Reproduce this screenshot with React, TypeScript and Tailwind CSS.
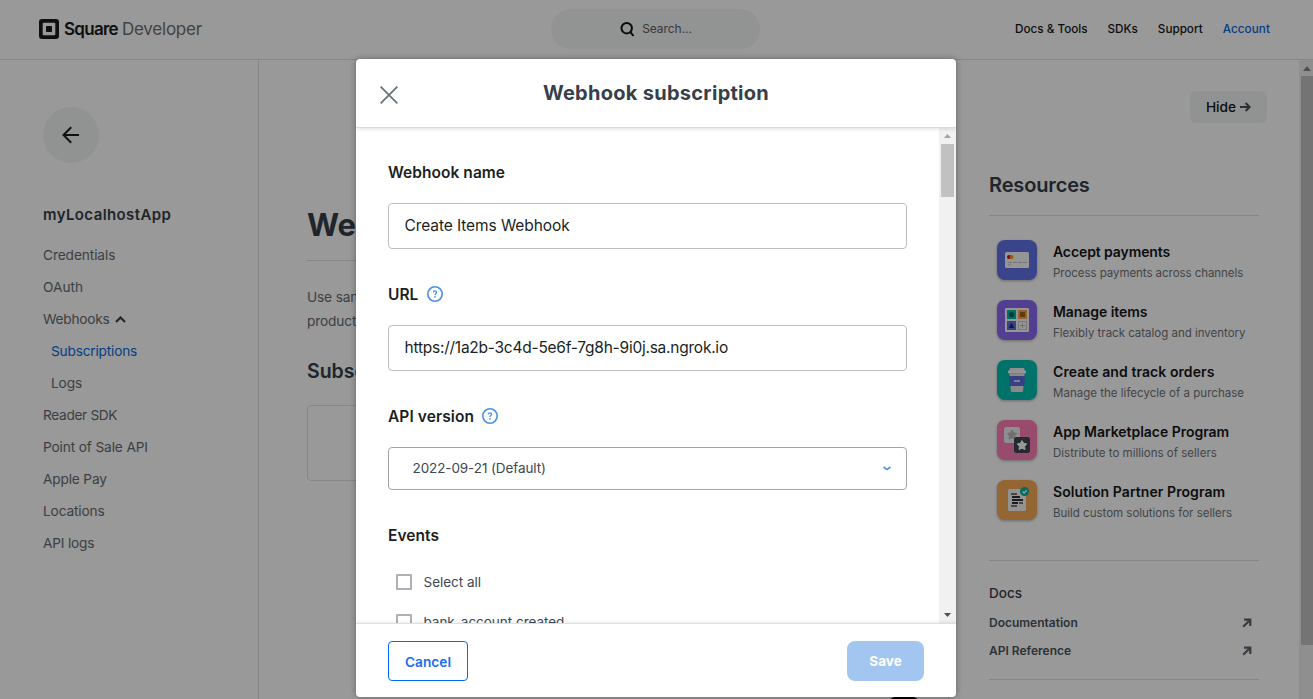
import React from "react";

type NavItem = { label: string; tracking: string; sub?: boolean; active?: boolean; open?: boolean };

const navItems: NavItem[] = [
  { label: "Credentials", tracking: "tracking-[-0.1px]" },
  { label: "OAuth", tracking: "tracking-[0px]" },
  { label: "Webhooks", tracking: "tracking-[-0.25px]", open: true },
  { label: "Subscriptions", tracking: "tracking-[-0.2px]", sub: true, active: true },
  { label: "Logs", tracking: "tracking-[-0.15px]", sub: true },
  { label: "Reader SDK", tracking: "tracking-[-0.34px]" },
  { label: "Point of Sale API", tracking: "tracking-[-0.14px]" },
  { label: "Apple Pay", tracking: "tracking-[-0.17px]" },
  { label: "Locations", tracking: "tracking-[-0.14px]" },
  { label: "API logs", tracking: "tracking-[-0.2px]" },
];

function Logo() {
  return (
    <div className="flex w-[163px] items-center">
      <svg width="20" height="20" viewBox="0 0 20 20">
        <rect width="20" height="20" rx="3" fill="#1a1a1a" />
        <rect x="3.7" y="3.7" width="12.6" height="12.6" rx="1" fill="#fff" />
        <rect x="7" y="7" width="6" height="6" rx="0.8" fill="#1a1a1a" />
      </svg>
      <span className="ml-[5px] text-[17px] leading-5 font-semibold tracking-[-0.72px] text-[#1a1a1a]">Square</span>
      <span className="ml-[4px] text-[17px] leading-5 tracking-[-0.23px] text-[#707070]">Developer</span>
    </div>
  );
}

function Header() {
  return (
    <header className="flex h-[60px] shrink-0 items-center border-b border-[#dedfe1] pr-[43px] pb-px pl-[39px]">
      <Logo />
      <div className="ml-[349px] flex h-10 w-[209px] items-center justify-center rounded-[20px] bg-[#f3f6f6]">
        <svg width="16" height="16" viewBox="0 0 16 16" fill="none" stroke="#111" strokeWidth="2">
          <circle cx="7.7" cy="7.2" r="5.2" />
          <path d="M11.3 10.8 14.5 15" />
        </svg>
        <span className="ml-[7px] text-[12px] tracking-[-0.05px] text-[#5c6064]">Search...</span>
      </div>
      <nav className="ml-auto flex gap-[20px] pt-0.5 text-[11.7px] font-medium text-[#151719]">
        <span>Docs &amp; Tools</span>
        <span>SDKs</span>
        <span>Support</span>
        <span className="tracking-[0.08px] text-[#0a5fe0]">Account</span>
      </nav>
    </header>
  );
}

function Sidebar() {
  return (
    <aside className="w-[259px] shrink-0 border-r border-[#dedfe1] pt-[47px] pl-[43px]">
      <div className="flex size-14 items-center justify-center rounded-full bg-[#f1f5f4]">
        <svg width="18" height="18" viewBox="0 0 18 18" fill="none" stroke="#1a1d1f" strokeWidth="2">
          <path d="M17 9H2M9.2 1.2 1.5 9l7.7 7.8" />
        </svg>
      </div>
      <div className="mt-[40px] text-[15px] leading-6 font-semibold tracking-[0.4px] text-[#343e48]">myLocalhostApp</div>
      <div className="mt-[12px] flex flex-col text-[13.7px] leading-8 text-[#666b70]">
        {navItems.map((n) => (
          <div key={n.label} className={n.active ? "pl-2 text-[#0a6adf]" : n.sub ? "pl-2" : "flex items-center"}>
            <span className={n.tracking}>{n.label}</span>
            {n.open && (
              <svg className="ml-[6px]" width="11" height="7" viewBox="0 0 11 7" fill="none" stroke="#3c4248" strokeWidth="2.2">
                <path d="M1 6l4.5-4.5L10 6" />
              </svg>
            )}
          </div>
        ))}
      </div>
    </aside>
  );
}

function MainColumn() {
  return (
    <main className="w-[689px] shrink-0 px-12 pt-[145px]">
      <h1 className="text-[31px] leading-10 font-bold text-[#343e48]">Webhooks</h1>
      <div className="mt-[15px] h-px bg-[#dedfe1]" />
      <p className="mt-6 text-[13.7px] leading-6 tracking-[-0.15px] text-[#666b70]">
        Use sandbox webhooks to test your application before you move to
        <br />
        production webhooks.
      </p>
      <h2 className="mt-[24px] text-[19.5px] leading-7 font-semibold text-[#343e48]">Subscriptions</h2>
      <div className="mt-[20px] h-[76px] rounded border border-[#dedfe1]" />
    </main>
  );
}

function CardIcon() {
  return (
    <>
      <rect x="8" y="12" width="24" height="16" rx="1.5" fill="#f8f8f8" />
      <circle cx="12" cy="17" r="2" fill="#e8001c" />
      <circle cx="14.6" cy="17" r="2" fill="#f59b1c" />
      <path d="M11 22.5h4M16 22.5h4M21 22.5h4M26 22.5h4M11 24.8h3" stroke="#bbb" strokeWidth="0.9" />
    </>
  );
}

function GridIcon() {
  return (
    <>
      <rect x="8" y="8" width="24" height="24" rx="1.2" fill="#f8f8f8" />
      <rect x="10" y="10" width="9" height="9" rx="0.6" fill="#00b8a3" />
      <circle cx="14.5" cy="14.5" r="2.6" fill="#00655d" />
      <rect x="21" y="10" width="9" height="9" rx="0.6" fill="#f0a550" />
      <rect x="23" y="12" width="5" height="5" fill="#a35e1a" />
      <rect x="10" y="21" width="9" height="9" rx="0.6" fill="#5f70dc" />
      <path d="M14.5 22.8 17.4 28h-5.8z" fill="#1d2c75" />
      <rect x="21.5" y="21.5" width="8" height="8" fill="none" stroke="#c9c9c9" />
      <path d="M25.5 23v5M23 25.5h5" stroke="#bbb" />
    </>
  );
}

function CupIcon() {
  return (
    <>
      <path d="M13 8h14l1 3.8H12z" fill="#ededed" />
      <rect x="11" y="10.5" width="18" height="3" rx="1" fill="#f9f9f9" />
      <path d="M12.5 13.5h15l-1.4 17.5a1.2 1.2 0 0 1-1.2 1h-9.8a1.2 1.2 0 0 1-1.2-1z" fill="#e4e4e4" />
      <path d="M12 16h16l-.8 10H12.8z" fill="#5d6be0" />
      <rect x="17" y="20" width="6" height="2" rx=".6" fill="#d4d6ef" />
    </>
  );
}

const star = "M0-5 1.6-2.2 4.8-1.6 2.6.8 3 4.1 0 2.7-3 4.1-2.6.8-4.8-1.6-1.6-2.2z";

function StarsIcon() {
  return (
    <>
      <rect x="7" y="7" width="16" height="16" rx="2.5" fill="#efeff0" />
      <path d={star} transform="translate(15 15)" fill="#b9bbbd" stroke="#b9bbbd" strokeWidth="1" strokeLinejoin="round" />
      <rect x="17" y="17" width="16" height="16" rx="2.5" fill="#3e4651" />
      <path d={star} transform="translate(25 25.5)" fill="#fff" stroke="#fff" strokeWidth="1" strokeLinejoin="round" />
    </>
  );
}

function DocIcon() {
  return (
    <>
      <rect x="11" y="9" width="18" height="22" rx="1.5" fill="#f6f6f6" />
      <path d="M14 14h6M22 23h4M14 26h6" stroke="#777" strokeWidth="1.8" />
      <path d="M15 17h8M15 20h11M15 23h6" stroke="#2a2f38" strokeWidth="2" />
      <circle cx="27.5" cy="11.5" r="4.5" fill="#00b5a3" />
      <path d="m25.600 11.600 1.500 1.400 2.600-2.800" stroke="#fff" strokeWidth="1.4" fill="none" />
    </>
  );
}

const resources = [
  { title: "Accept payments", text: "Process payments across channels", bg: "bg-[#5f72e6]", icon: <CardIcon />, t1: "tracking-[-0.1px]", t2: "tracking-[-0.05px]" },
  { title: "Manage items", text: "Flexibly track catalog and inventory", bg: "bg-[#8b69ee]", icon: <GridIcon />, t1: "tracking-[-0.07px]", t2: "tracking-[-0.01px]" },
  { title: "Create and track orders", text: "Manage the lifecycle of a purchase", bg: "bg-[#00bfaf]", icon: <CupIcon />, t1: "tracking-[0.08px]", t2: "tracking-[0.02px]" },
  { title: "App Marketplace Program", text: "Distribute to millions of sellers", bg: "bg-[#ff7db8]", icon: <StarsIcon />, t1: "tracking-[-0.03px]", t2: "tracking-[0.01px]" },
  { title: "Solution Partner Program", text: "Build custom solutions for sellers", bg: "bg-[#f5aa55]", icon: <DocIcon />, t1: "tracking-[0.08px]", t2: "tracking-[-0.01px]" },
];

function OutArrow() {
  return (
    <svg width="10" height="10" viewBox="0 0 10 10" fill="none" stroke="#5c6470" strokeWidth="2.2">
      <path d="M2 1.700h6.300V8M8 2 1.200 8.800" />
    </svg>
  );
}

function Resources() {
  return (
    <section className="flex w-[351px] shrink-0 flex-col border-l border-[#dedfe1] pt-[31px] pr-10 pl-10">
      <div className="-mr-2 flex h-8 w-[77px] items-center justify-center gap-[4px] self-end rounded-md bg-[#f1f5f4] text-[13.7px] font-medium text-[#151719]">
        <span>Hide</span>
        <svg width="11" height="10" viewBox="0 0 11 10" fill="none" stroke="#4a4f54" strokeWidth="2">
          <path d="M0 5h9M5.600 1l4 4-4 4" />
        </svg>
      </div>
      <h2 className="mt-[48px] text-[20px] leading-7 font-semibold tracking-[-0.15px] text-[#343e48]">Resources</h2>
      <div className="mt-4 h-px bg-[#dedfe1]" />
      <div className="mt-6 flex flex-col gap-5 pl-2">
        {resources.map((r) => (
          <div key={r.title} className="flex h-10 gap-4">
            <div className={`size-10 shrink-0 overflow-hidden rounded-lg shadow-[0_1px_3px_rgba(0,0,0,0.3)] ${r.bg}`}>
              <svg width="40" height="40" viewBox="0 0 40 40">{r.icon}</svg>
            </div>
            <div className="pt-0.5 whitespace-nowrap">
              <div className={`text-[14px] leading-5 font-semibold text-[#151719] ${r.t1}`}>{r.title}</div>
              <div className={`pt-px text-[11.5px] leading-5 text-[#6f7378] ${r.t2}`}>{r.text}</div>
            </div>
          </div>
        ))}
      </div>
      <div className="mt-10 h-px bg-[#dedfe1]" />
      <div className="mt-[22px] text-[13.5px] leading-5 font-medium text-[#343e48]">Docs</div>
      <div className="mt-1.5 flex flex-col text-[12px] leading-7 font-semibold text-[#4c545c]">
        <div className="flex items-center justify-between pr-[7px]">Documentation<OutArrow /></div>
        <div className="flex items-center justify-between pr-[7px]">API Reference<OutArrow /></div>
      </div>
      <div className="mt-[14px] h-px bg-[#dedfe1]" />
    </section>
  );
}

function PageScrollbar() {
  return (
    <div className="flex w-[14px] shrink-0 flex-col bg-[#efefef] pl-[2px]">
      <div className="flex h-4 items-center justify-center">
        <svg width="8" height="5" viewBox="0 0 8 5"><path d="M0 5 4 0l4 5z" fill="#868686" /></svg>
      </div>
      <div className="h-[569px] bg-[#c1c1c1]" />
    </div>
  );
}

function Help() {
  return (
    <svg className="mb-0.5" width="16" height="16" viewBox="0 0 16 16" fill="none" stroke="#4a90e2">
      <circle cx="8" cy="8" r="7.2" strokeWidth="1.6" />
      <path d="M6.400 6.400C6.400 4.400 9.600 4.500 9.600 6.300 9.600 7.600 8 7.600 8 9" strokeWidth="1.3" />
      <circle cx="8" cy="10.900" r=".8" fill="#4a90e2" stroke="none" />
    </svg>
  );
}

function Dialog() {
  return (
    <div className="absolute top-[59px] left-[356px] flex h-[638px] w-[600px] flex-col overflow-hidden rounded bg-white shadow-[0_0_6px_rgba(0,0,0,0.35)]">
      <div className="relative flex h-[69px] shrink-0 items-center justify-center border-b border-[#d9dcde] shadow-[0_1px_4px_rgba(0,0,0,0.12)]">
        <svg className="absolute top-[27px] left-6" width="18" height="18" viewBox="0 0 18 18" stroke="#6c7378" strokeWidth="1.8">
          <path d="M.6.6l16.800 16.800M17.400.6.6 17.400" />
        </svg>
        <h2 className="text-[20px] leading-7 font-bold tracking-[0.28px] text-[#373f4a]">Webhook subscription</h2>
      </div>
      <div className="flex min-h-0 flex-1">
        <div className="flex-1 overflow-hidden px-8 pt-[33px] text-[#1b1f23]">
          <div className="text-[15.5px] leading-6 font-semibold tracking-[0.05px]">Webhook name</div>
          <div className="mt-[18px] flex h-[46px] items-center rounded border border-[#babec2] px-[15.5px] text-[15.5px] leading-6 tracking-[-0.09px]">Create Items Webhook</div>
          <div className="mt-[34px] flex items-center gap-[8.5px] text-[15.5px] leading-6 font-semibold tracking-[0.05px]">URL<Help /></div>
          <div className="mt-[18px] flex h-[46px] items-center rounded border border-[#babec2] px-[15.5px] pb-px text-[15.5px] tracking-[-0.24px]">https://1a2b-3c4d-5e6f-7g8h-9i0j.sa.ngrok.io</div>
          <div className="mt-[34px] flex items-center gap-2 text-[15.5px] leading-6 font-semibold tracking-[0.08px]">API version<Help /></div>
          <div className="mt-[18px] flex h-[43px] items-center justify-between rounded border border-[#a1a5a9] pr-[15px] pb-px pl-[23.5px] text-[13.5px] tracking-[-0.1px] text-[#3d4852]">
            2022-09-21 (Default)
            <svg width="8" height="5" viewBox="0 0 8 5" fill="none" stroke="#4a90e2" strokeWidth="1.6">
              <path d="M.6 1 4 3.600 7.400 1" />
            </svg>
          </div>
          <div className="mt-[34px] text-[15.5px] leading-6 font-semibold tracking-[0.05px]">Events</div>
          <div className="mt-[14px] flex flex-col pl-2 text-[13.5px] leading-10 tracking-[-0.03px] text-[#3d4852]">
            <div className="flex items-center gap-[11.5px]"><span className="size-4 rounded-[1px] border-2 border-[#adb1b6]" />Select all</div>
            <div className="flex items-center gap-[11.5px]"><span className="size-4 rounded-[1px] border-2 border-[#adb1b6]" />bank_account.created</div>
          </div>
        </div>
        <div className="flex w-[17px] shrink-0 flex-col items-center bg-[#f1f1f1]">
          <div className="flex h-4 items-center"><svg width="7" height="4" viewBox="0 0 7 4"><path d="M0 4 3.500 0 7 4z" fill="#a3a3a3" /></svg></div>
          <div className="h-[53px] w-[13px] bg-[#c1c1c1]" />
          <div className="mt-auto flex h-[17px] items-center"><svg width="7" height="4" viewBox="0 0 7 4"><path d="M0 0 3.500 4 7 0z" fill="#505050" /></svg></div>
        </div>
      </div>
      <div className="relative flex h-[74px] shrink-0 items-center justify-between border-t border-[#dddfe1] px-8 shadow-[0_-1px_3px_rgba(0,0,0,0.08)]">
        <div className="flex h-10 w-20 items-center justify-center rounded border border-[#006aff] pt-[3px] text-[13.7px] font-semibold text-[#1a6cf0]">Cancel</div>
        <div className="flex h-10 w-[77px] items-center justify-center rounded-lg bg-[#a3c6f0] pt-0.5 text-[13.5px] font-bold text-white">Save</div>
      </div>
    </div>
  );
}

export default function App() {
  return (
    <div className="relative flex h-[699px] w-[1313px] flex-col overflow-hidden bg-white font-['Inter','Liberation_Sans',sans-serif]">
      <Header />
      <div className="flex min-h-0 flex-1">
        <Sidebar />
        <MainColumn />
        <Resources />
        <PageScrollbar />
      </div>
      <div className="absolute top-[697px] left-[889px] h-10 w-[30px] rounded-t-[6px] bg-black" />
      <div className="absolute inset-0 bg-black/40" />
      <Dialog />
    </div>
  );
}
